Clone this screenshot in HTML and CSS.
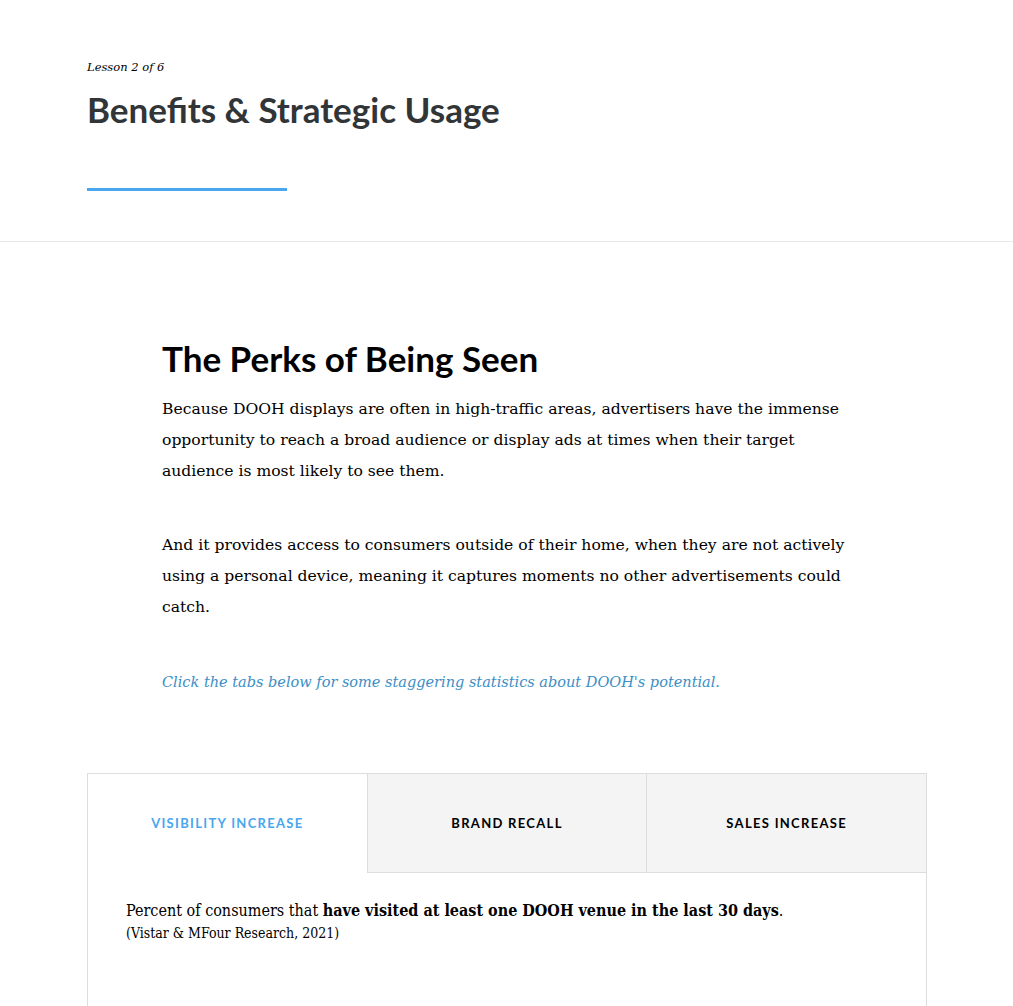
FILE: index.html
```html
<!DOCTYPE html>
<html lang="en">
<head>
    <meta charset="UTF-8">
    <title>Benefits &amp; Strategic Usage</title>
    <link rel="stylesheet" href="styles.css">
</head>
<body>
<div class="lesson-header">
    <div class="lesson-header__count">Lesson 2 of 6</div>
    <h1 class="lesson-header__title">Benefits &amp; Strategic Usage</h1>
    <div class="lesson-header__bar"></div>
</div>

<div class="lesson-body">
    <div class="block-text">
        <h2 class="block-text__heading">The Perks of Being Seen</h2>
        <p>Because DOOH displays are often in high-traffic areas, advertisers have the immense opportunity to reach a broad audience or display ads at times when their target audience is most likely to see them.</p>
        <p>And it provides access to consumers outside of their home, when they are not actively using a personal device, meaning it captures moments no other advertisements could catch.</p>
        <p class="block-text__hint">Click the tabs below for some staggering statistics about DOOH's potential.</p>
    </div>

    <div class="tabs">
        <div class="tabs__list">
            <button class="tabs__tab tabs__tab--active">Visibility Increase</button>
            <button class="tabs__tab">Brand Recall</button>
            <button class="tabs__tab">Sales Increase</button>
        </div>
        <div class="tabs__panel">
            <p>Percent of consumers that <strong>have visited at least one DOOH venue in the last 30 days</strong>.<br>
            <span class="tabs__source">(Vistar &amp; MFour Research, 2021)</span></p>
        </div>
    </div>
</div>
</body>
</html>
```

FILE: styles.css
```css
*{
    box-sizing: border-box;
    margin:0;
    padding:0;
}
body{
    background-color: #fff;
    font-family: "DejaVu Serif", serif;
    color: #000;
}
.lesson-header{
    padding: 59px 87px 50px;
    border-bottom: 1px solid #e8e8e8;
}
.lesson-header__count{
    font-size: 11.5px;
    font-style: italic;
    line-height: 16px;
}
.lesson-header__title{
    font-family: Lato, sans-serif;
    font-weight: 700;
    font-size: 35px;
    line-height: 40px;
    color: #313537;
    margin-top: 14px;
}
.lesson-header__bar{
    width: 200px;
    height: 3px;
    background-color: #4aa6ee;
    margin-top: 59px;
}
.lesson-body{
    padding-top: 94px;
}
.block-text{
    width: 690px;
    margin-left: 162px;
}
.block-text__heading{
    font-family: Lato, sans-serif;
    font-weight: 700;
    font-size: 35px;
    line-height: 44px;
    color: #000;
    margin-bottom: 14px;
}
.block-text p{
    font-size: 15.6px;
    line-height: 31px;
    margin-bottom: 43px;
}
.block-text .block-text__hint{
    font-size: 14.5px;
    font-style: italic;
    color: #3c8ec6;
    margin-bottom: 0;
    margin-top: 44px;
}
.tabs{
    width: 840px;
    margin: 75px 0 0 87px;
    border: 1px solid #ddd;
    border-bottom: none;
    height: 240px;
}
.tabs__list{
    display: flex;
}
.tabs__tab{
    flex: 1;
    height: 99px;
    border: none;
    border-left: 1px solid #ddd;
    border-bottom: 1px solid #ddd;
    background-color: #f4f4f4;
    font-family: Lato, sans-serif;
    font-weight: 700;
    font-size: 13px;
    letter-spacing: 1.3px;
    text-transform: uppercase;
    color: #000;
}
.tabs__tab:first-child{
    border-left: none;
}
.tabs__tab--active{
    background-color: #fff;
    color: #4aa6ee;
    border-bottom-color: #fff;
}
.tabs__panel{
    padding: 27px 38px;
}
.tabs__panel p{
    font-family: "DejaVu Serif Condensed", serif;
    font-size: 16px;
    line-height: 22px;
}
.tabs__source{
    font-size: 14px;
}
```
